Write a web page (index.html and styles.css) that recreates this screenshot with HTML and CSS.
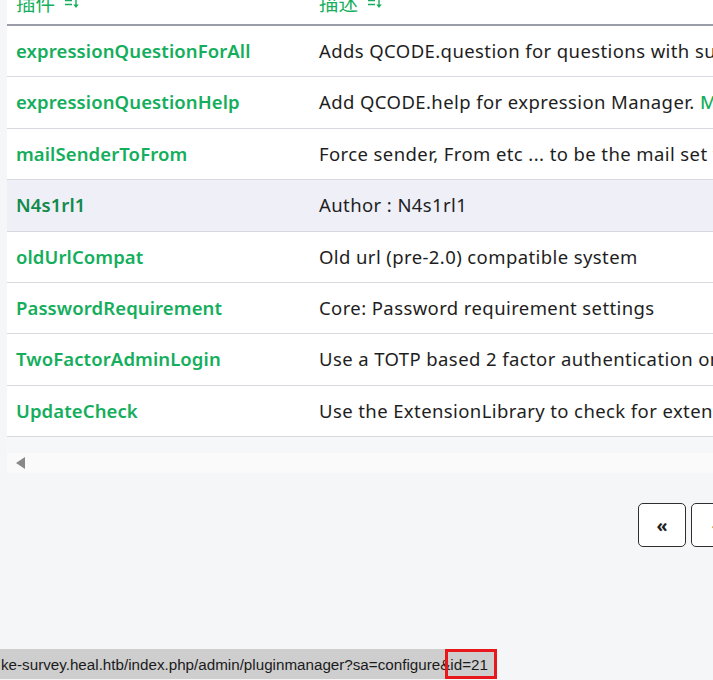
FILE: index.html
```html
<!DOCTYPE html>
<html lang="en">
<head>
<meta charset="utf-8">
<title>Plugins</title>
<link rel="stylesheet" href="styles.css">
</head>
<body>
<div class="page">
  <div class="grid-wrap">
    <table class="plugins">
      <thead>
        <tr>
          <th class="col-name"><span class="th-in">插件<svg class="sort" viewBox="0 0 16 12" width="16" height="12"><path d="M1 3.5h7M1 7.5h7" stroke="currentColor" stroke-width="1.4" fill="none"/><path d="M12 1v7" stroke="currentColor" stroke-width="1.4" fill="none"/><path d="M9.3 7.5h5.4L12 11z" fill="currentColor"/></svg></span></th>
          <th><span class="th-in">描述<svg class="sort" viewBox="0 0 16 12" width="16" height="12"><path d="M1 3.5h7M1 7.5h7" stroke="currentColor" stroke-width="1.4" fill="none"/><path d="M12 1v7" stroke="currentColor" stroke-width="1.4" fill="none"/><path d="M9.3 7.5h5.4L12 11z" fill="currentColor"/></svg></span></th>
        </tr>
      </thead>
      <tbody>
        <tr><td class="col-name"><a class="name">expressionQuestionForAll</a></td><td>Adds QCODE.question for questions with subquestions</td></tr>
        <tr><td class="col-name"><a class="name">expressionQuestionHelp</a></td><td>Add QCODE.help for expression Manager. <a class="link">More information</a></td></tr>
        <tr><td class="col-name"><a class="name">mailSenderToFrom</a></td><td>Force sender, From etc ... to be the mail set for the survey</td></tr>
        <tr class="hover"><td class="col-name"><a class="name">N4s1rl1</a></td><td>Author : N4s1rl1</td></tr>
        <tr><td class="col-name"><a class="name">oldUrlCompat</a></td><td>Old url (pre-2.0) compatible system</td></tr>
        <tr><td class="col-name"><a class="name">PasswordRequirement</a></td><td>Core: Password requirement settings</td></tr>
        <tr><td class="col-name"><a class="name">TwoFactorAdminLogin</a></td><td>Use a TOTP based 2 factor authentication on admin login</td></tr>
        <tr><td class="col-name"><a class="name">UpdateCheck</a></td><td>Use the ExtensionLibrary to check for extension updates</td></tr>
      </tbody>
    </table>
  </div>
  <div class="scroll-gap"></div>
  <div class="hscroll"><span class="arrow-left"></span></div>
  <nav class="pager">
    <button class="pg">«</button>
    <button class="pg">‹</button>
    <button class="pg">1</button>
    <button class="pg">›</button>
    <button class="pg">»</button>
  </nav>
</div>
<div class="statusbar"><span class="url">ke-survey.heal.htb/index.php/admin/pluginmanager?sa=configure&amp;</span><span class="mark">id=21</span></div>
</body>
</html>
```
FILE: styles.css
```css
html, body {
  margin: 0;
  height: 680px;
  overflow: hidden;
}
body {
  background: #f5f6f8;
  font-family: "Noto Sans", "Noto Sans CJK SC", sans-serif;
  color: #1e1e1e;
}
.page {
  padding-left: 7px;
}
.grid-wrap {
  overflow: hidden;
  background: #fff;
  margin-top: -26.4px;
}
.plugins {
  border-collapse: collapse;
  width: 1400px;
}
.plugins th,
.plugins td {
  padding: 12px 9px;
  line-height: 26.4px;
  text-align: left;
  white-space: nowrap;
  vertical-align: middle;
}
.plugins th {
  padding-top: 16px;
  padding-bottom: 8px;
  border-bottom: 2px solid #9a9ca8;
  font-weight: 400;
  font-size: 19.5px;
  color: #14ae5c;
  font-family: "Noto Sans CJK SC", "Noto Sans", sans-serif;
}
.th-in {
  display: inline-flex;
  align-items: center;
  gap: 9px;
}
.sort {
  color: #14ae5c;
}
.plugins td {
  border-bottom: 1px solid #d8d9de;
  font-size: 18.5px;
  letter-spacing: 0.4px;
  color: #1e1e1e;
}
.plugins .col-name {
  width: 285px;
}
.name {
  color: #14ae5c;
  font-weight: 600;
  letter-spacing: 0.1px;
}
.link {
  color: #14ae5c;
  font-weight: 500;
}
.hover td {
  background: #eeeff7;
}
.hover .name {
  color: #128a4a;
}
.scroll-gap {
  height: 16px;
  background: #f6f7f9;
}
.hscroll {
  height: 20px;
  background: #fafafa;
  display: flex;
  align-items: center;
  padding-left: 9px;
}
.arrow-left {
  width: 0;
  height: 0;
  border-top: 6px solid transparent;
  border-bottom: 6px solid transparent;
  border-right: 9px solid #888;
}
.pager {
  display: flex;
  gap: 5px;
  margin-top: 30px;
  padding-left: 631px;
}
.pg {
  flex: 0 0 48px;
  width: 48px;
  height: 44px;
  box-sizing: border-box;
  border: 1px solid #2e2e2e;
  border-radius: 5px;
  background: #fff;
  color: #1e1e1e;
  font-family: "Noto Sans", sans-serif;
  font-size: 18px;
  font-weight: 700;
  padding: 0;
}
.statusbar {
  position: fixed;
  left: 0;
  bottom: 1px;
  height: 30px;
  display: flex;
  align-items: stretch;
  padding: 0 8px 0 1px;
  background: #cecece;
  color: #1b1b1b;
  font-family: "Liberation Sans", sans-serif;
  font-size: 15.2px;
  white-space: nowrap;
}
.url,
.mark {
  display: flex;
  align-items: center;
}
.mark {
  position: relative;
}
.mark::after {
  content: "";
  position: absolute;
  left: -5px;
  right: -9px;
  top: 0;
  bottom: 0;
  box-sizing: border-box;
  border: 3px solid #e8171b;
}
```
